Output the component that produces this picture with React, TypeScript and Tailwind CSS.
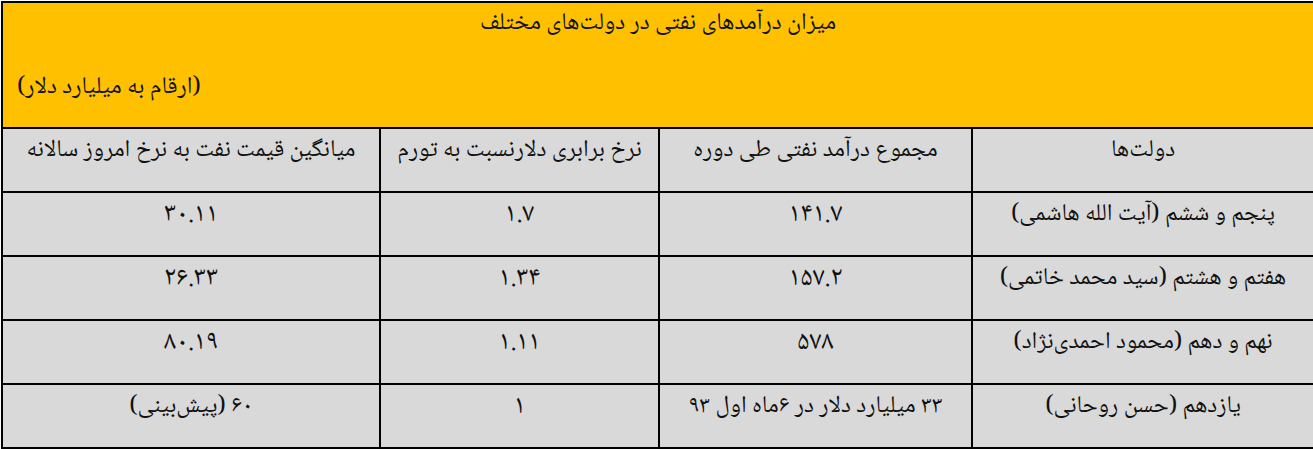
import React from "react";

const rows = [
	["پنجم و ششم (آیت الله هاشمی)", "۱۴۱.۷", "۱.۷", "۳۰.۱۱"],
	["هفتم و هشتم (سید محمد خاتمی)", "۱۵۷.۲", "۱.۳۴", "۲۶.۳۳"],
	["نهم و دهم (محمود احمدی‌نژاد)", "۵۷۸", "۱.۱۱", "۸۰.۱۹"],
	["یازدهم (حسن روحانی)", "۳۳ میلیارد دلار در ۶ماه اول ۹۳", "۱", "۶۰ (پیش‌بینی)"],
];

const headers = [
	"دولت‌ها",
	"مجموع درآمد نفتی طی دوره",
	"نرخ برابری دلارنسبت به تورم",
	"میانگین قیمت نفت به نرخ امروز سالانه",
];

const cell = "border-2 border-black bg-[#d9d9d9] h-[64px] align-top text-center pt-[7px] px-2";

// numbers only (digits and the dot) get a slightly larger size
const isNumber = (s: string) => /^[۰-۹.]+$/.test(s);

const App = () => {
	return (
		<div
			className="pt-px pl-px bg-white min-h-screen text-[24px] leading-[30px] text-[#111]"
			style={{ fontFamily: '"Noto Naskh Arabic", "Noto Sans Arabic", "DejaVu Sans", sans-serif' }}
		>
			<table dir="rtl" className="w-[1312px] table-fixed border-collapse">
				<colgroup>
					<col className="w-[342px]" />
					<col className="w-[313px]" />
					<col className="w-[279px]" />
					<col className="w-[378px]" />
				</colgroup>
				<tbody>
					<tr>
						<td colSpan={4} className="border-2 border-b-0 border-black bg-[#ffc000] h-[63px] align-top text-center pt-[6px]">
							میزان درآمدهای نفتی در دولت‌های مختلف
						</td>
					</tr>
					<tr>
						<td colSpan={4} className="border-2 border-t-0 border-black bg-[#ffc000] h-[63px] align-top text-left pt-[8px] pl-[14px]">
							(ارقام به میلیارد دلار)
						</td>
					</tr>
					<tr>
						{headers.map((h) => (
							<td key={h} className={cell}>
								{h}
							</td>
						))}
					</tr>
					{rows.map((r) => (
						<tr key={r[0]}>
							{r.map((c, i) => (
								<td key={i} className={cell}>
									{isNumber(c) ? <span className="text-[27px]">{c}</span> : c}
								</td>
							))}
						</tr>
					))}
				</tbody>
			</table>
		</div>
	);
};

export default App;
